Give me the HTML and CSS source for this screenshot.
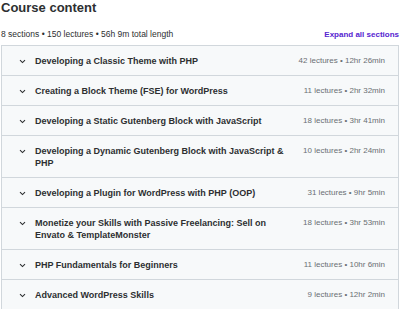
FILE: index.html
```html
<!DOCTYPE html>
<html lang="en">

<head>
  <meta charset="UTF-8">
  <meta name="viewport" content="width=device-width, initial-scale=1.0">
  <title>Course content</title>
  <link rel="stylesheet" href="styles.css">
</head>

<body>
  <div class="curriculum">
    <h2 class="heading">Course content</h2>
    <div class="summary">
      <span class="stats">8 sections • 150 lectures • 56h 9m total length</span>
      <a class="expand" href="#">Expand all sections</a>
    </div>
    <ul class="sections">
      <li class="section">
        <svg class="chev" width="7" height="5" viewBox="0 0 7 5"><polyline points="1,1.2 3.5,3.6 6,1.2" /></svg>
        <span class="title">Developing a Classic Theme with PHP</span>
        <span class="meta">42 lectures • 12hr 26min</span>
      </li>
      <li class="section">
        <svg class="chev" width="7" height="5" viewBox="0 0 7 5"><polyline points="1,1.2 3.5,3.6 6,1.2" /></svg>
        <span class="title">Creating a Block Theme (FSE) for WordPress</span>
        <span class="meta">11 lectures • 2hr 32min</span>
      </li>
      <li class="section">
        <svg class="chev" width="7" height="5" viewBox="0 0 7 5"><polyline points="1,1.2 3.5,3.6 6,1.2" /></svg>
        <span class="title">Developing a Static Gutenberg Block with JavaScript</span>
        <span class="meta">18 lectures • 3hr 41min</span>
      </li>
      <li class="section">
        <svg class="chev" width="7" height="5" viewBox="0 0 7 5"><polyline points="1,1.2 3.5,3.6 6,1.2" /></svg>
        <span class="title">Developing a Dynamic Gutenberg Block with JavaScript &amp; PHP</span>
        <span class="meta">10 lectures • 2hr 24min</span>
      </li>
      <li class="section">
        <svg class="chev" width="7" height="5" viewBox="0 0 7 5"><polyline points="1,1.2 3.5,3.6 6,1.2" /></svg>
        <span class="title">Developing a Plugin for WordPress with PHP (OOP)</span>
        <span class="meta">31 lectures • 9hr 5min</span>
      </li>
      <li class="section">
        <svg class="chev" width="7" height="5" viewBox="0 0 7 5"><polyline points="1,1.2 3.5,3.6 6,1.2" /></svg>
        <span class="title">Monetize your Skills with Passive Freelancing: Sell on Envato &amp; TemplateMonster</span>
        <span class="meta">18 lectures • 3hr 53min</span>
      </li>
      <li class="section">
        <svg class="chev" width="7" height="5" viewBox="0 0 7 5"><polyline points="1,1.2 3.5,3.6 6,1.2" /></svg>
        <span class="title">PHP Fundamentals for Beginners</span>
        <span class="meta">11 lectures • 10hr 6min</span>
      </li>
      <li class="section">
        <svg class="chev" width="7" height="5" viewBox="0 0 7 5"><polyline points="1,1.2 3.5,3.6 6,1.2" /></svg>
        <span class="title">Advanced WordPress Skills</span>
        <span class="meta">9 lectures • 12hr 2min</span>
      </li>
    </ul>
  </div>
</body>

</html>
```

FILE: styles.css
```css
* {
  padding: 0;
  margin: 0;
  box-sizing: border-box;
}

body {
  font-family: "Liberation Sans", Arial, sans-serif;
  color: #2d2f31;
  background-color: #fff;
}

.curriculum {
  width: 400px;
  padding: 0 1px 0 1px;
}

.heading {
  font-size: 13px;
  line-height: 16px;
  font-weight: 700;
}

.summary {
  display: flex;
  justify-content: space-between;
  align-items: center;
  margin-top: 11px;
  height: 14px;
  font-size: 8.5px;
}

.stats {
  color: #2d2f31;
}

.expand {
  color: #5624d0;
  font-weight: 700;
  font-size: 8px;
  text-decoration: none;
}

.sections {
  list-style: none;
  margin-top: 4px;
  border: 1px solid #d1d7dc;
}

.section {
  display: flex;
  align-items: flex-start;
  background-color: #f7f9fa;
  border-top: 1px solid #d1d7dc;
  padding: 9px 13px 8px 17px;
}

.section:first-child {
  border-top: none;
}

.chev {
  flex: none;
  margin-top: 4px;
  margin-right: 9px;
  fill: none;
  stroke: #2d2f31;
  stroke-width: 1.1;
}

.title {
  flex: 1;
  font-size: 9px;
  line-height: 12px;
  font-weight: 700;
  padding-right: 12px;
}

.meta {
  flex: none;
  font-size: 8px;
  line-height: 12px;
  color: #6a6f73;
}
```
